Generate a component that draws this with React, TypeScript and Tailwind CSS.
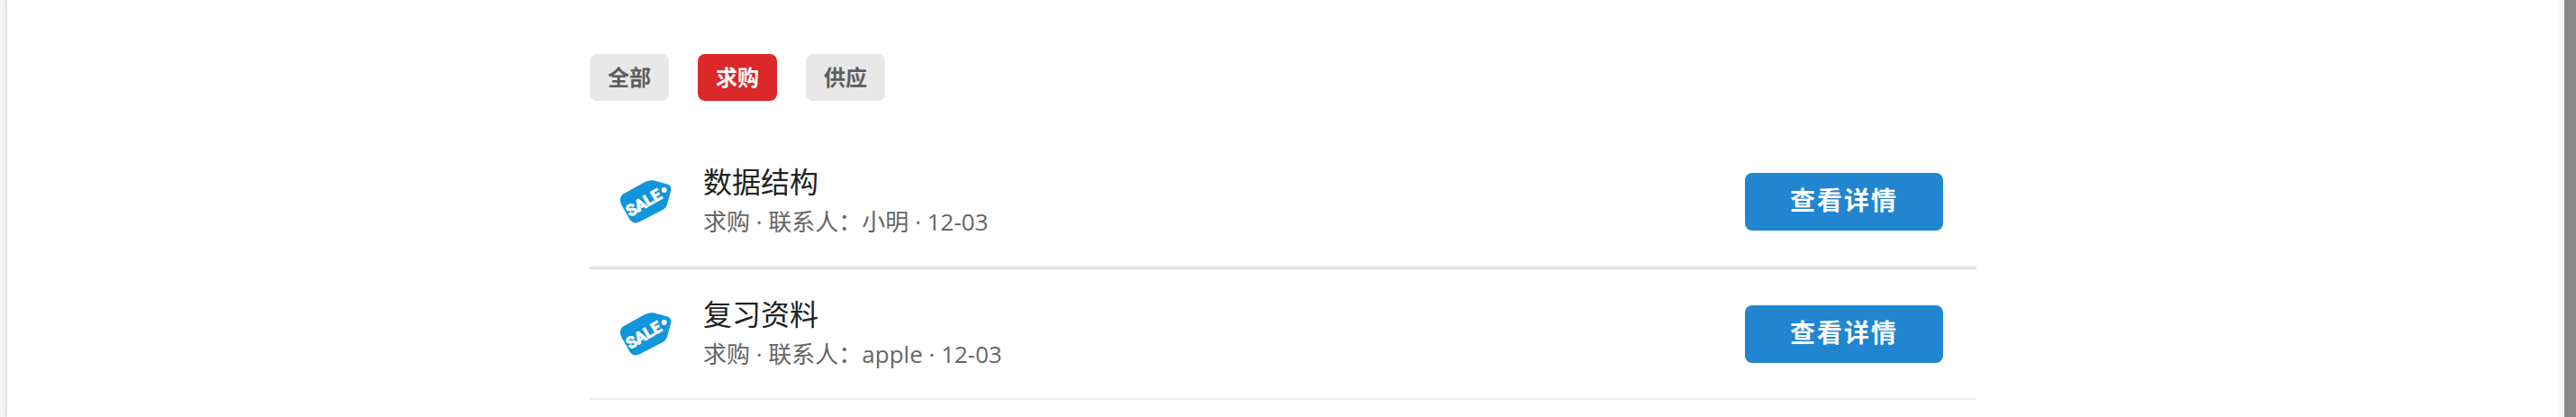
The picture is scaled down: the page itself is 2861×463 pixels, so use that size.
type Listing = {
  id: number;
  title: string;
  kind: string;
  contact: string;
  date: string;
};

const filters = ["全部", "求购", "供应"];

const listings: Listing[] = [
  { id: 1, title: "数据结构", kind: "求购", contact: "小明", date: "12-03" },
  { id: 2, title: "复习资料", kind: "求购", contact: "apple", date: "12-03" },
];

function SaleTag() {
  return (
    <svg viewBox="28 28 168 140" className="h-12 w-14 shrink-0 overflow-visible" aria-hidden="true">
      <path
        d="M38 72 L110 32 Q124 25 138 27 L182 39 Q199 44 197 60 L184 106 Q180 119 169 125 L92 165 Q72 174 60 158 L31 107 Q20 84 38 72 Z"
        fill="#1296db"
      />
      <circle cx="174" cy="59" r="9" fill="#fff" />
      <text
        x="60"
        y="149"
        transform="rotate(-30 60 149)"
        fill="#fff"
        stroke="#fff"
        strokeWidth="3"
        fontSize="53"
        fontWeight="700"
        fontFamily="Roboto, sans-serif"
      >
        SALE
      </text>
    </svg>
  );
}

function ListingRow({ item }: { item: Listing }) {
  return (
    <li className="border-t-2 border-[#dddddd] first:border-t-0">
      <div className="flex items-center border-b-2 border-[#eeeeee] py-[30px] pr-[37px] pl-[34px]">
        <SaleTag />
        <div className="ml-9 min-w-0 flex-1 pb-0.5">
          <h2 className="text-[32px] leading-10 text-[#212121]">{item.title}</h2>
          <p className="mt-2 text-[26px] leading-[33px] text-[#666666]">
            {item.kind} · 联系人：{item.contact} · {item.date}
          </p>
        </div>
        <button
          type="button"
          className="h-16 w-[220px] shrink-0 rounded-lg bg-[#2185d0] pb-1 text-[28px] leading-8 font-bold tracking-[2px] text-white"
        >
          查看详情
        </button>
      </div>
    </li>
  );
}

export default function App() {
  return (
    <div className="flex min-h-screen bg-[#f5f5f5] font-['Open_Sans','Noto_Sans_CJK_SC',sans-serif]">
      <div className="w-2 shrink-0" />
      <main className="min-w-0 flex-1 bg-white px-8 pt-[60px] shadow-[0_0_4px_rgba(0,0,0,0.25)]">
        <div className="mx-auto max-w-[1540px]">
          <nav className="flex gap-8">
            {filters.map((label) => (
              <button
                key={label}
                type="button"
                aria-pressed={label === "求购"}
                className={
                  label === "求购"
                    ? "h-[52px] w-[88px] rounded-lg bg-[#db2828] text-2xl font-bold text-white"
                    : "h-[52px] w-[88px] rounded-lg bg-[#e8e8e8] text-2xl font-bold text-[#5d5d5d]"
                }
              >
                {label}
              </button>
            ))}
          </nav>
          <ul className="mt-10">
            {listings.map((item) => (
              <ListingRow key={item.id} item={item} />
            ))}
          </ul>
        </div>
      </main>
      <div className="w-1.5 shrink-0 bg-[#fafafa]" />
      <div className="w-[13px] shrink-0 bg-[#8a8a8a]" />
    </div>
  );
}
